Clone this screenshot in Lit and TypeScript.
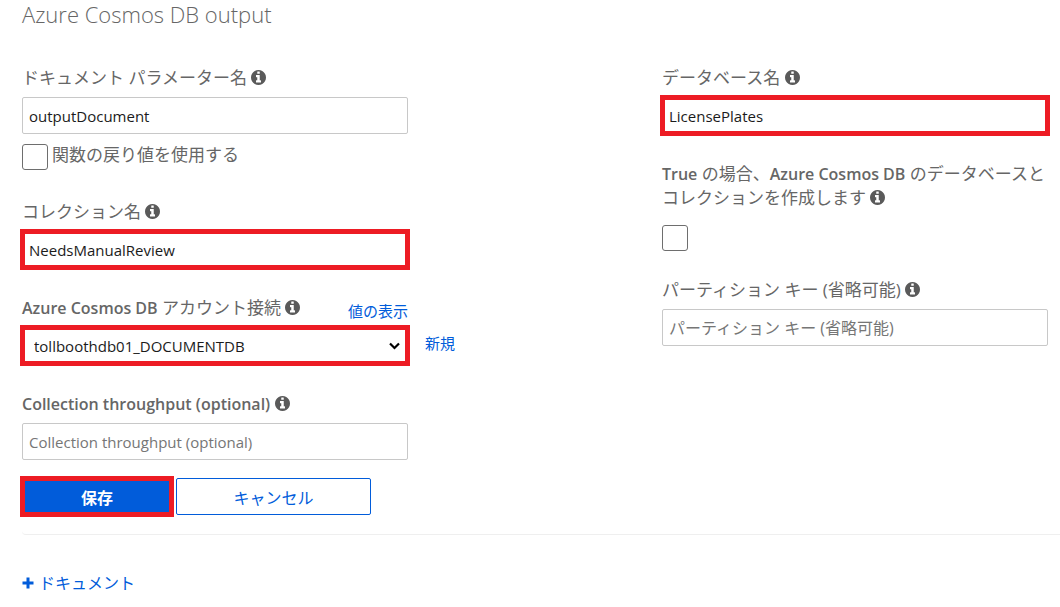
import { LitElement, html, css } from "lit";
import { customElement } from "lit/decorators.js";

@customElement("info-icon")
class InfoIcon extends LitElement {
  static styles = css`
    :host {
      display: inline-block;
      width: 15px;
      height: 15px;
      vertical-align: -1px;
    }
    svg {
      display: block;
      width: 100%;
      height: 100%;
    }
  `;
  render() {
    return html`<svg viewBox="0 0 1536 1536" aria-hidden="true">
      <path
        fill="#5a5a5a"
        d="M1024 1248v-160q0-14-9-23t-23-9h-96V544q0-14-9-23t-23-9H544q-14 0-23 9t-9 23v160q0 14 9 23t23 9h96v320h-96q-14 0-23 9t-9 23v160q0 14 9 23t23 9h448q14 0 23-9t9-23zM896 352V192q0-14-9-23t-23-9H672q-14 0-23 9t-9 23v160q0 14 9 23t23 9h192q14 0 23-9t9-23zm640 416q0 209-103 385.500T1153.500 1433 768 1536t-385.500-103T103 1153.500 0 768t103-385.500T382.500 103 768 0t385.500 103T1433 382.500 1536 768z"
      />
    </svg>`;
  }
}

@customElement("app-root")
class AppRoot extends LitElement {
  static styles = css`
    :host {
      display: block;
      color: #666;
      font-family: "Open Sans", "Noto Sans CJK JP", sans-serif;
      font-size: 17px;
      line-height: 24px;
    }
    * {
      box-sizing: border-box;
    }
    .card {
      margin-left: 22px;
      padding-bottom: 19px;
      border-bottom: 1px solid #efefef;
      border-bottom-left-radius: 4px;
    }
    h1 {
      margin: 0;
      padding-bottom: 38px;
      font-size: 22px;
      font-weight: 300;
      line-height: 28px;
    }
    .columns {
      display: flex;
      padding-right: 12px;
    }
    .left {
      flex: 1 1 254px;
      min-width: 0;
      display: grid;
      grid-template-columns: minmax(0, 1fr) 254px;
      align-content: start;
    }
    .left > * {
      grid-column: 1;
    }
    .left > .connection {
      grid-column: 1 / -1;
      display: grid;
      grid-template-columns: subgrid;
    }
    .right {
      flex: 1 1 0;
      min-width: 0;
    }
    .field {
      margin-bottom: 28px;
    }
    .field label {
      display: block;
    }
    .heading {
      display: flex;
      justify-content: space-between;
      margin-bottom: 7px;
    }
    .latin {
      font-size: 16px;
      font-weight: 600;
    }
    .box {
      display: block;
      width: 100%;
      height: 37px;
      margin: 0;
      padding: 0 6px;
      border: 1px solid #c8c8c8;
      border-radius: 2px;
      background: #fff;
      color: #1b1b1b;
      font-family: inherit;
      font-size: 15px;
    }
    .box::placeholder {
      color: #767676;
      opacity: 1;
    }
    .wide-text {
      font-size: 16px;
    }
    .marked {
      border-radius: 0;
      outline: 5px solid #ed1c24;
      outline-offset: -3px;
    }
    .tick {
      display: flex;
      gap: 4px;
      margin: 10px 0 30px;
    }
    .tick label {
      line-height: 22px;
    }
    .check {
      flex: none;
      appearance: none;
      display: block;
      width: 26px;
      height: 26px;
      margin: 0;
      border: 1px solid #6e6e6e;
      border-radius: 3px;
      background: #fff;
    }
    .select {
      grid-column: 1;
      display: grid;
      align-items: center;
    }
    .select > * {
      grid-area: 1 / 1;
    }
    .select .box {
      appearance: none;
      padding: 0 28px 0 11px;
    }
    .chevron {
      justify-self: end;
      width: 11px;
      height: 8px;
      margin-right: 8px;
      pointer-events: none;
    }
    a {
      color: #015cda;
      text-decoration: none;
    }
    .small-link {
      font-size: 15px;
      line-height: 30px;
      height: 24px;
    }
    .new {
      grid-column: 2;
      justify-self: start;
      padding-left: 17px;
      font-size: 15px;
      line-height: 32px;
    }
    .connection .heading {
      grid-column: 1;
    }
    .create {
      margin: 28px 0 27px;
    }
    .create label {
      padding-bottom: 16px;
      line-height: 23px;
    }
    .actions {
      display: flex;
      gap: 4px;
      margin-top: -10px;
    }
    button {
      height: 37px;
      padding: 0 12px;
      border: 1px solid #015cda;
      border-radius: 2px;
      font-family: inherit;
      font-size: 16px;
    }
    .save {
      min-width: 150px;
      border-radius: 0;
      background: #015cda;
      color: #fff;
      font-weight: 600;
    }
    .cancel {
      min-width: 195px;
      background: #fff;
      color: #015cda;
    }
    .add {
      display: inline-flex;
      align-items: center;
      gap: 5px;
      margin: 36px 0 0 22px;
      font-size: 16px;
    }
    .plus {
      width: 12px;
      height: 12px;
    }
  `;

  render() {
    return html`
      <form class="card" @submit=${(e: Event) => e.preventDefault()}>
        <h1>Azure Cosmos DB output</h1>
        <div class="columns">
          <div class="left">
            <div>
              <div class="heading">
                <label for="param">ドキュメント パラメーター名 <info-icon></info-icon></label>
              </div>
              <input id="param" class="box" type="text" .value=${"outputDocument"} />
            </div>
            <div class="tick">
              <input id="return" class="check" type="checkbox" />
              <label for="return">関数の戻り値を使用する</label>
            </div>
            <div class="field">
              <div class="heading">
                <label for="collection">コレクション名 <info-icon></info-icon></label>
              </div>
              <input id="collection" class="box marked" type="text" .value=${"NeedsManualReview"} />
            </div>
            <div class="field connection">
              <div class="heading">
                <label for="account"
                  ><span class="latin">Azure Cosmos DB</span> アカウント接続 <info-icon></info-icon
                ></label>
                <a class="small-link" href="#show">値の表示</a>
              </div>
              <div class="select">
                <select id="account" class="box marked">
                  <option>tollboothdb01_DOCUMENTDB</option>
                </select>
                <svg class="chevron" viewBox="0 0 11 8" aria-hidden="true">
                  <path d="M1 1.500l4.500 4.500L10 1.500" fill="none" stroke="#000" stroke-width="2.200" />
                </svg>
              </div>
              <a class="new" href="#new">新規</a>
            </div>
            <div class="field">
              <div class="heading">
                <label for="throughput"
                  ><span class="latin">Collection throughput (optional)</span> <info-icon></info-icon
                ></label>
              </div>
              <input
                id="throughput"
                class="box"
                type="text"
                placeholder="Collection throughput (optional)"
              />
            </div>
            <div class="actions">
              <button class="save marked" type="submit">保存</button>
              <button class="cancel" type="button">キャンセル</button>
            </div>
          </div>
          <div class="right">
            <div>
              <div class="heading">
                <label for="database">データベース名 <info-icon></info-icon></label>
              </div>
              <input id="database" class="box marked" type="text" .value=${"LicensePlates"} />
            </div>
            <div class="field create">
              <label for="create"
                ><span class="latin">True</span> の場合、<span class="latin">Azure Cosmos DB</span>
                のデータベースとコレクションを作成します <info-icon></info-icon
              ></label>
              <input id="create" class="check" type="checkbox" />
            </div>
            <div>
              <div class="heading">
                <label for="partition">パーティション キー (省略可能) <info-icon></info-icon></label>
              </div>
              <input
                id="partition"
                class="box wide-text"
                type="text"
                placeholder="パーティション キー (省略可能)"
              />
            </div>
          </div>
        </div>
      </form>
      <a class="add" href="#add">
        <svg class="plus" viewBox="0 0 12 12" aria-hidden="true">
          <path d="M4.500 0.500h3v4h4v3h-4v4h-3v-4h-4v-3h4z" fill="#015cda" />
        </svg>
        ドキュメント
      </a>
    `;
  }
}
